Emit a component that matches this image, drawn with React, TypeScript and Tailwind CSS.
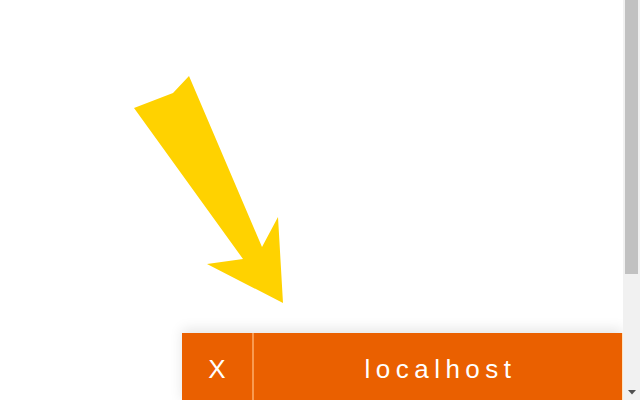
import React from "react";

function Arrow() {
  return (
    <svg width="300" height="333" viewBox="0 0 300 333" className="block">
      <polygon
        points="134,108 173,93 189,76 262,247 278,217 283,303 207,264 243,259"
        fill="#ffd200"
      />
    </svg>
  );
}

function Scrollbar() {
  return (
    <div className="w-[17px] shrink-0 h-full bg-[#f1f1f1] flex flex-col">
      <div className="h-[274px] ml-[2px] mr-[2px] bg-[#c1c1c1]" />
      <div className="flex-1" />
      <div className="h-[15px] flex items-center justify-center pl-[1px]">
        <svg width="8" height="5" viewBox="0 0 8 5">
          <polygon points="0,0 8,0 4,4.5" fill="#505050" />
        </svg>
      </div>
    </div>
  );
}

export default function App() {
  return (
    <div className="h-[400px] flex overflow-hidden bg-white font-['Liberation_Sans',sans-serif]">
      <div className="flex-1 flex flex-col">
        <div className="h-[333px] shrink-0">
          <Arrow />
        </div>

        <div className="pl-[182px]">
          <div className="flex h-[71px] bg-[#ea6000] text-white border-r border-[#fde3c0] shadow-[0_-4px_12px_rgba(0,0,0,0.1)]">
            <button className="w-[70px] shrink-0 flex items-center justify-center text-[26px] leading-none">
              X
            </button>
            <div className="w-[2px] bg-[#f99a50]" />
            <div className="flex-1 flex items-center justify-center text-[26px] leading-none tracking-[5.5px] pl-[5px]">
              localhost
            </div>
          </div>
        </div>
      </div>
      <Scrollbar />
    </div>
  );
}
